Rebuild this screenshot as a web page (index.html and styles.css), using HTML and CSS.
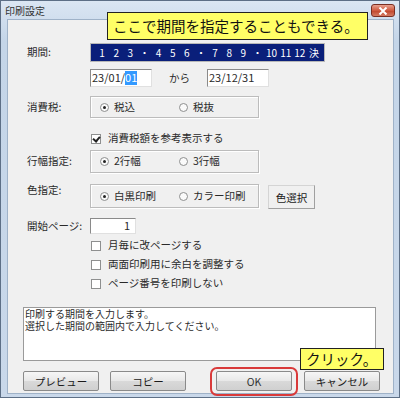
FILE: index.html
```html
<!DOCTYPE html>
<html lang="ja">
<head>
    <meta charset="UTF-8">
    <title>印刷設定</title>
    <link rel="stylesheet" href="styles.css">
</head>
<body>
<div class="window">
    <div class="titlebar">
        <span class="title">印刷設定</span>
        <span class="close">
            <svg width="10" height="8" viewBox="0 0 10 8"><path d="M1.5 0.5 L8.5 7.5 M8.5 0.5 L1.5 7.5" stroke="#fff" stroke-width="2"/></svg>
        </span>
    </div>

    <div class="client">
        <div class="row period-row">
            <span class="label">期間:</span>
            <div class="months">
                <span>1</span><span>2</span><span>3</span><span>・</span>
                <span>4</span><span>5</span><span>6</span><span>・</span>
                <span>7</span><span>8</span><span>9</span><span>・</span>
                <span>10</span><span>11</span><span>12</span><span>決</span>
            </div>
        </div>

        <div class="row dates-row">
            <span class="label"></span>
            <div class="textbox date">23/01/<span class="sel">01</span></div>
            <span class="kara">から</span>
            <div class="textbox date">23/12/31</div>
        </div>

        <div class="row tax-row">
            <span class="label">消費税:</span>
            <div class="group">
                <span class="opt"><span class="radio on"></span>税込</span>
                <span class="opt"><span class="radio"></span>税抜</span>
            </div>
        </div>

        <div class="row check-row first-check">
            <span class="label"></span>
            <span class="opt"><span class="check on"></span>消費税額を参考表示する</span>
        </div>

        <div class="row lines-row">
            <span class="label">行幅指定:</span>
            <div class="group">
                <span class="opt"><span class="radio on"></span>2行幅</span>
                <span class="opt"><span class="radio"></span>3行幅</span>
            </div>
        </div>

        <div class="row color-row">
            <span class="label">色指定:</span>
            <div class="group">
                <span class="opt"><span class="radio on"></span>白黒印刷</span>
                <span class="opt"><span class="radio"></span>カラー印刷</span>
            </div>
            <button class="btn color-btn">色選択</button>
        </div>

        <div class="row start-row">
            <span class="label">開始ページ:</span>
            <div class="textbox page">1</div>
        </div>

        <div class="checks">
            <div class="row check-row">
                <span class="label"></span>
                <span class="opt"><span class="check"></span>月毎に改ページする</span>
            </div>
            <div class="row check-row">
                <span class="label"></span>
                <span class="opt"><span class="check"></span>両面印刷用に余白を調整する</span>
            </div>
            <div class="row check-row">
                <span class="label"></span>
                <span class="opt"><span class="check"></span>ページ番号を印刷しない</span>
            </div>
        </div>

        <div class="message">印刷する期間を入力します。<br>選択した期間の範囲内で入力してください。</div>

        <div class="buttons">
            <button class="btn">プレビュー</button>
            <button class="btn">コピー</button>
            <button class="btn ok">OK</button>
            <button class="btn">キャンセル</button>
        </div>
    </div>

    <div class="callout callout-top">ここで期間を指定することもできる。</div>
    <div class="callout callout-click">クリック。</div>
</div>
</body>
</html>
```

FILE: styles.css
```css
body {
    margin: 0;
    font-family: "Noto Sans CJK JP", "Noto Sans", sans-serif;
    font-size: 10.5px;
    line-height: 1.2;
    color: #2a2a2a;
    background: #ffffff;
}
.window {
    position: relative;
    width: 400px;
    height: 398px;
    box-sizing: border-box;
    border: 1px solid #5d6f86;
    background: linear-gradient(#dbe6f3, #c4d5e8 40px, #c9d8ea);
    padding: 0 6px 4px 7px;
    display: flex;
    flex-direction: column;
}
.titlebar {
    height: 19px;
    display: flex;
    align-items: center;
    margin: 0 -2px 0 -3px;
}
.title {
    font-size: 10px;
    color: #333;
}
.close {
    margin-left: auto;
    width: 24px;
    height: 13px;
    box-sizing: border-box;
    border: 1px solid #7a2e22;
    border-radius: 3px;
    background: linear-gradient(#e8a08e, #cf5a40 50%, #c0432a 51%, #d47a62);
    display: flex;
    align-items: center;
    justify-content: center;
}
.client {
    flex: 1;
    background: #f0f0f0;
    box-shadow: 0 0 0 1px #9fb2c8;
    padding: 23px 0 0 15px;
}
.row {
    display: flex;
    align-items: center;
}
.label {
    width: 67px;
    padding-left: 4px;
    box-sizing: border-box;
    flex: none;
}
.period-row {
    height: 19px;
}
.months {
    width: 235px;
    height: 19px;
    box-sizing: border-box;
    background: #0a1f7a;
    border: 1px solid #b8b8b8;
    color: #ffffff;
    display: flex;
    align-items: center;
    padding: 0 3px 0 4px;
    font-size: 10px;
}
.months span {
    flex: 1;
    text-align: center;
}
.dates-row {
    margin-top: 7px;
    height: 18px;
}
.textbox {
    background: #ffffff;
    border: 1px solid #8a8a8a;
    border-right-color: #e0e0e0;
    border-bottom-color: #e0e0e0;
    box-sizing: border-box;
    display: flex;
    align-items: center;
}
.date {
    width: 62px;
    height: 18px;
    padding-left: 1px;
    font-size: 11px;
}
.sel {
    background: #3399ff;
    color: #ffffff;
}
.kara {
    margin: 0 17px 0 17px;
}
.group {
    width: 169px;
    box-sizing: border-box;
    border: 1px solid #bcbcbc;
    box-shadow: inset 1px 1px 0 #ffffff, 1px 1px 0 #ffffff;
    display: flex;
    align-items: center;
    padding-left: 9px;
}
.opt {
    display: flex;
    align-items: center;
    gap: 5px;
}
.group .opt {
    width: 79px;
}
.radio {
    width: 9px;
    height: 9px;
    box-sizing: border-box;
    border: 1px solid #8e8f8f;
    border-radius: 50%;
    background: #fafafa;
    display: flex;
    align-items: center;
    justify-content: center;
}
.radio.on::after {
    content: "";
    width: 3px;
    height: 3px;
    border-radius: 50%;
    background: #222;
}
.check {
    width: 10px;
    height: 10px;
    box-sizing: border-box;
    border: 1px solid #8e8f8f;
    background: #ffffff;
    margin-right: 2px;
    position: relative;
}
.check.on::after {
    content: "";
    position: absolute;
    left: 2px;
    top: 0px;
    width: 3px;
    height: 5px;
    border: solid #222;
    border-width: 0 2px 2px 0;
    transform: rotate(40deg);
}
.tax-row {
    margin-top: 9px;
}
.tax-row .group {
    height: 22px;
}
.check-row {
    height: 13px;
}
.check-row .label {
    width: 68px;
}
.first-check {
    margin-top: 14px;
}
.lines-row {
    margin-top: 5px;
}
.lines-row .group {
    height: 23px;
}
.color-row {
    margin-top: 11px;
    align-items: flex-start;
}
.color-row .group {
    height: 24px;
}
.btn {
    font-family: inherit;
    font-size: 10.5px;
    color: #1a1a1a;
    height: 20px;
    box-sizing: border-box;
    border: 1px solid #8a8a8a;
    border-radius: 2px;
    background: linear-gradient(#f6f6f6, #e8e8e8 50%, #d9d9d9 51%, #d0d0d0);
    padding: 0;
}
.color-btn {
    width: 47px;
    height: 24px;
    margin: 1px 0 0 9px;
    background: #f0f0f0;
    border-color: #d4d4d4 #a0a0a0 #a0a0a0 #d4d4d4;
    border-radius: 0;
}
.start-row {
    margin-top: 9px;
}
.page {
    width: 46px;
    height: 16px;
    justify-content: flex-end;
    padding-right: 5px;
    font-size: 11px;
}
.checks {
    margin-top: 5px;
    display: flex;
    flex-direction: column;
    gap: 6px;
}
.message {
    margin-top: 17px;
    width: 353px;
    height: 54px;
    box-sizing: border-box;
    background: #ffffff;
    border: 1px solid #9a9a9a;
    padding: 0 1px;
    line-height: 12px;
    font-size: 10px;
}
.buttons {
    margin-top: 10px;
    display: flex;
    align-items: center;
}
.buttons .btn {
    width: 76px;
}
.buttons .btn:nth-child(2) {
    margin-left: 11px;
}
.buttons .ok {
    margin-left: 30px;
    position: relative;
    color: #333;
}
.buttons .btn:nth-child(4) {
    margin-left: 12px;
}
.ok::after {
    content: "";
    position: absolute;
    top: -5px;
    left: -7px;
    right: -7px;
    bottom: -6px;
    border: 2px solid #d93a3a;
    border-radius: 7px;
}
.callout {
    position: absolute;
    background: #ffff66;
    border: 1px solid #222;
    color: #111;
    font-size: 14.5px;
    white-space: nowrap;
    display: flex;
    align-items: center;
    box-sizing: border-box;
}
.callout-top {
    left: 106px;
    top: 11px;
    width: 261px;
    height: 28px;
    padding-left: 5px;
}
.callout-click {
    left: 299px;
    top: 347px;
    width: 84px;
    height: 22px;
    padding-left: 5px;
}
```
